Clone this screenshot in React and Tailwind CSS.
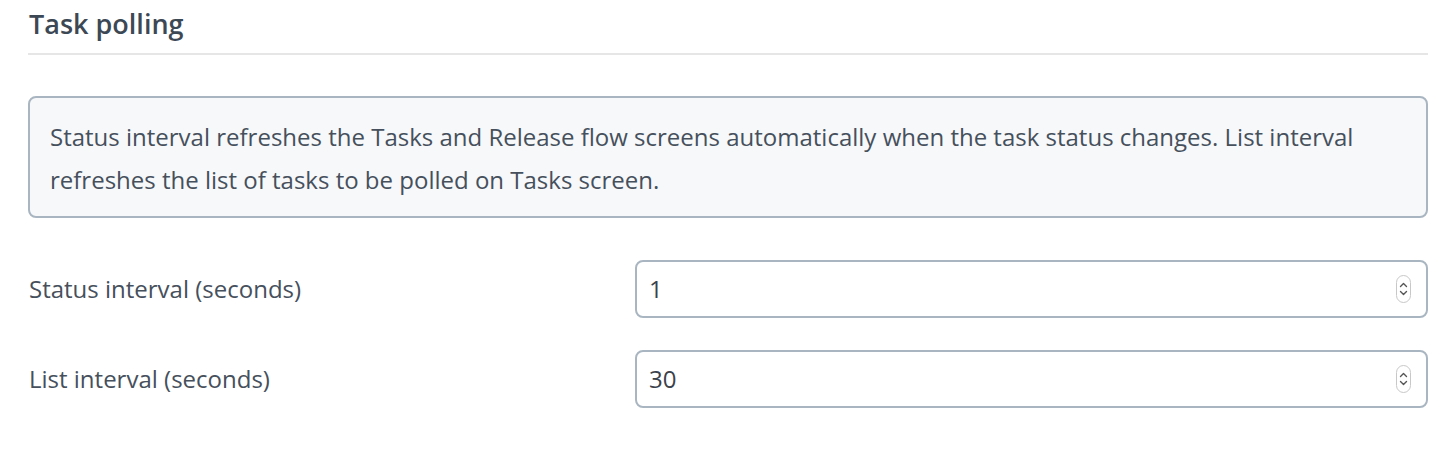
import React from 'react';

const Spinner = () => (
  <div className="w-[15px] h-[28px] rounded-full border border-[#c8c8c8] bg-white flex flex-col items-center justify-center gap-[2px]">
    <svg width="9" height="6" viewBox="0 0 9 6" fill="none">
      <path d="M1.5 4.5 L4.5 1.5 L7.5 4.5" stroke="#555" strokeWidth="1.4" strokeLinecap="round" strokeLinejoin="round" />
    </svg>
    <svg width="9" height="6" viewBox="0 0 9 6" fill="none">
      <path d="M1.5 1.5 L4.5 4.5 L7.5 1.5" stroke="#555" strokeWidth="1.4" strokeLinecap="round" strokeLinejoin="round" />
    </svg>
  </div>
);

const NumberRow = ({ label, value }) => (
  <div className="flex items-center">
    <label className="w-[607px] text-[24px] text-[#46505c] pl-[1px]">{label}</label>
    <div className="flex-1 h-[58px] rounded-[8px] border-2 border-[#a9b6c1] bg-white flex items-center justify-between pl-[12px] pr-[15px]">
      <span className="text-[24px] text-[#3a424b]">{value}</span>
      <Spinner />
    </div>
  </div>
);

export default function App() {
  return (
    <div className="w-[1450px] h-[454px] bg-white pl-[28px] pr-[22px] pt-[4px]" style={{ fontFamily: '"Open Sans", sans-serif' }}>
      <h2 className="text-[27px] font-semibold text-[#3d4855] leading-[40px] pl-[1px]">Task polling</h2>
      <div className="mt-[9px] h-[2px] bg-[#e6e6e6]" />

      <div className="mt-[41px] rounded-[8px] border-2 border-[#a9b6c1] bg-[#f7f8fa] pl-[20px] pr-[20px] pt-[17px] pb-[15px]">
        <p className="text-[24px] leading-[43px] text-[#46505c]">
          Status interval refreshes the Tasks and Release flow screens automatically when the task status changes. List interval
          refreshes the list of tasks to be polled on Tasks screen.
        </p>
      </div>

      <div className="mt-[42px] flex flex-col gap-[32px]">
        <NumberRow label="Status interval (seconds)" value="1" />
        <NumberRow label="List interval (seconds)" value="30" />
      </div>
    </div>
  );
}
